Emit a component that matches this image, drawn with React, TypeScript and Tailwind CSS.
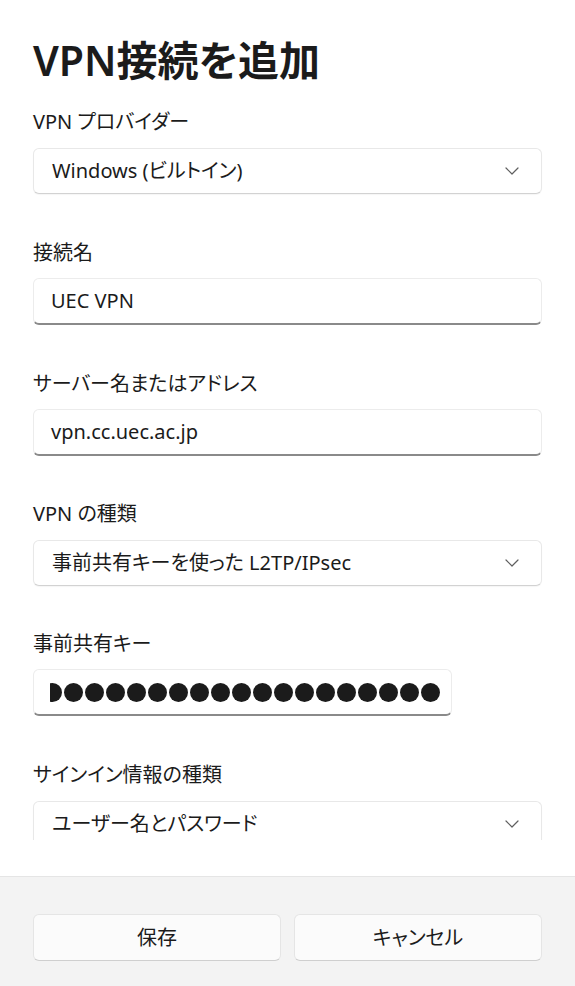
import React from "react";

const font = { fontFamily: '"Noto Sans", "Noto Sans CJK JP", sans-serif' };

function Chevron() {
  return (
    <svg width="14" height="8" viewBox="0 0 14 8" fill="none">
      <path d="M1 1l6 6 6-6" stroke="#5f5f5f" strokeWidth="1.2" strokeLinecap="round" strokeLinejoin="round" />
    </svg>
  );
}

function Label({ children, tight }: { children: React.ReactNode; tight?: boolean }) {
  return (
    <div className={tight ? "h-[28px] leading-[28px] text-[20px] text-[#1b1b1b] mb-[11px]" : "h-[28px] leading-[28px] text-[20px] text-[#1b1b1b] mb-[12px]"}>
      {children}
    </div>
  );
}

function Dropdown({ value }: { value: string }) {
  return (
    <div className="h-[46px] w-[509px] flex items-center justify-between pl-[18px] pr-[22px] bg-white rounded-[6px] border border-[#e8e8e8] border-b-[#d2d2d2] shadow-[0_1px_1px_rgba(0,0,0,0.04)]">
      <span className="text-[20px] text-[#1b1b1b] leading-none">{value}</span>
      <Chevron />
    </div>
  );
}

function TextBox({ value }: { value: string }) {
  return (
    <div className="h-[47px] w-[509px] flex items-center pl-[17px] bg-white rounded-[6px] border border-[#ececec] border-b-[2px] border-b-[#8a8a8a]">
      <span className="text-[20px] text-[#1b1b1b] leading-none">{value}</span>
    </div>
  );
}

function Group({ label, children, tight, short }: { label: string; children: React.ReactNode; tight?: boolean; short?: boolean }) {
  return (
    <div className={short ? "mb-[44px]" : "mb-[45px]"}>
      <Label tight={tight}>{label}</Label>
      {children}
    </div>
  );
}

export default function App() {
  const dots = Array.from({ length: 19 });
  return (
    <div className="w-[575px] h-[986px] flex flex-col bg-white [font-feature-settings:'palt']" style={font}>
      <div className="h-[840px] overflow-hidden px-[33px] pt-[34px]">
        <h1 className="h-[52px] leading-[52px] text-[41px] font-semibold text-[#1b1b1b] mb-[22px]">VPN接続を追加</h1>
        <Group label="VPN プロバイダー">
          <Dropdown value="Windows (ビルトイン)" />
        </Group>
        <Group label="接続名" tight>
          <TextBox value="UEC VPN" />
        </Group>
        <Group label="サーバー名またはアドレス" tight short>
          <TextBox value="vpn.cc.uec.ac.jp" />
        </Group>
        <Group label="VPN の種類" short>
          <Dropdown value="事前共有キーを使った L2TP/IPsec" />
        </Group>
        <Group label="事前共有キー" tight>
          <div className="h-[47px] w-[419px] flex items-center pl-[16px] pr-[11px] bg-white rounded-[6px] border border-[#ececec] border-b-[2px] border-b-[#8a8a8a]">
            <div className="flex-1 flex justify-end gap-[2px] overflow-hidden">
              {dots.map((_, i) => (
                <div key={i} className="w-[19px] h-[19px] shrink-0 rounded-full bg-[#1b1b1b]" />
              ))}
            </div>
          </div>
        </Group>
        <Group label="サインイン情報の種類">
          <Dropdown value="ユーザー名とパスワード" />
        </Group>
      </div>
      <div className="h-[36px] bg-white" />
      <div className="flex-1 border-t border-[#e5e5e5] bg-[#f3f3f3] px-[33px] pt-[37px] flex gap-[13px] items-start">
        <button className="flex-1 h-[47px] rounded-[6px] bg-[#fbfbfb] border border-[#e5e5e5] border-b-[#cfcfcf] text-[20px] text-[#1b1b1b]">保存</button>
        <button className="flex-1 h-[47px] rounded-[6px] bg-[#fbfbfb] border border-[#e5e5e5] border-b-[#cfcfcf] text-[20px] text-[#1b1b1b]">キャンセル</button>
      </div>
    </div>
  );
}
